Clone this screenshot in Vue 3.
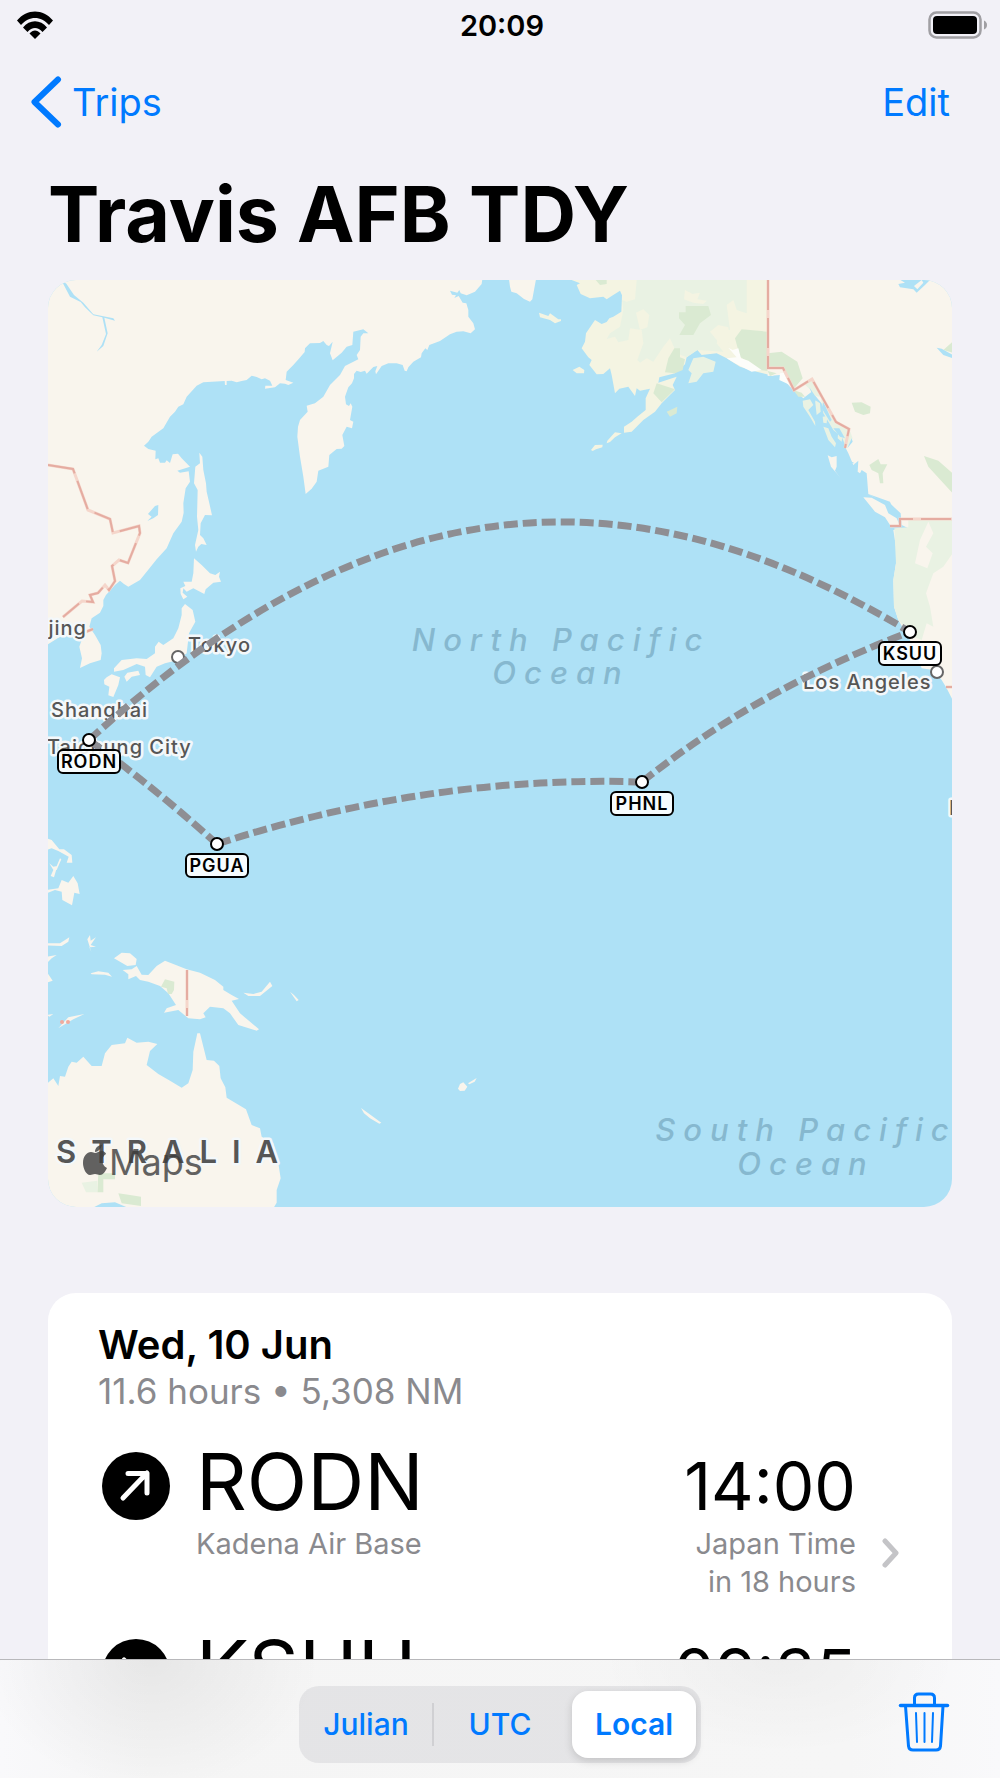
<template>
	<div class="screen">
		<main class="scroll">
			<div class="status">
				<svg class="status__wifi" viewBox="0 0 38 28" aria-hidden="true">
					<path d="M1 9.500C11-2.500 27-2.500 37 9.500L33 14C25 4.500 13 4.500 5 14Z" />
					<path d="M7 16.500C13.500 8 24.500 8 31 16.500L26.500 21C22 15.500 16 15.500 11.500 21Z" />
					<path d="M13.500 22.500C17 18.500 21 18.500 24.500 22.500L19 28Z" />
				</svg>
				<time class="status__time">20:09</time>
				<svg class="status__battery" viewBox="0 0 60 28" aria-hidden="true">
					<rect x="1.500" y="1.500" width="51" height="25" rx="7" fill="none" stroke="#a09fa3" stroke-width="2.500" />
					<rect x="5" y="5" width="44" height="18" rx="4" />
					<path d="M56 9.500Q59 11 59 14T56 18.500Z" fill="#a09fa3" />
				</svg>
			</div>

			<nav class="nav">
				<a href="#trips" class="nav__back">
					<svg viewBox="0 0 32 52" aria-hidden="true"><path d="M28 3.500L4.500 26L28 48.500" /></svg>
					Trips
				</a>
				<button type="button" class="nav__edit">Edit</button>
			</nav>

			<h1 class="title">Travis AFB TDY</h1>

			<svg class="map" viewBox="48 280 904 927" role="img" aria-label="Trip route map">
				<rect x="48" y="280" width="904" height="927" fill="#aee1f6" />

				<!-- east asia -->
				<g class="land" transform="translate(40 270) scale(.33333)">
					<path d="M20 28H1327L1325 42L1305 65L1280 76L1262 70L1258 60L1252 68L1230 62L1236 74L1248 76L1243 84L1256 78L1268 98L1279 100L1285 120L1285 140L1300 160L1305 178L1292 190L1270 184L1250 185L1230 193L1200 213L1168 225L1162 240L1156 235L1145 250L1143 262L1120 275L1105 292L1100 304L1094 302L1088 285L1070 280L1045 280L1025 288L1008 313L1006 304L1012 288L1000 291L980 311L975 302L962 306L950 302L942 312L942 325L936 340L925 352L915 380L918 403L927 408L932 400L937 410L930 450L940 455L936 475L920 470L907 495L913 528L905 536L890 537L868 555L865 590L835 602L830 635L815 656L797 672L790 620L780 560L772 500L774 470L780 450L803 425L800 407L825 400L850 380L870 345L900 315L915 288L955 268L950 255L960 240L962 200L970 190L985 190L970 178L940 185L937 225L920 230L905 248L878 271L870 250L878 215L867 228L860 225L850 213L840 219L810 220L795 235L794 246L778 265L760 285L740 305L737 330L760 338L745 345L735 341L720 340L705 352L675 356L676 347L697 347L690 332L675 325L665 328L650 321L635 317L620 330L605 333L590 337L575 332L560 333L560 345L555 345L554 333L490 337L470 347L440 380L430 403L415 410L405 425L390 440L370 475L335 500L325 515L312 527L325 537L347 542L346 568L355 565L360 578L375 578L380 571L390 579L398 553L414 551L425 565L450 590L412 602L420 608L446 604L450 635L437 655L430 700L431 728L425 755L400 790L380 835L350 868L320 905L300 930L265 950L252 942L240 932L225 945L198 975L190 990L190 1008L180 1028L155 1045L148 1070L165 1095L182 1125L185 1150L182 1170L150 1180L120 1194L126 1165L118 1130L125 1110L110 1085L85 1075L60 1100L20 1125Z" />
					<path d="M478 548L487 560L490 600L498 640L500 665L508 700L516 736L495 735L482 760L480 795L490 805L500 825L484 822L475 830L468 845L465 825L475 780L471 740L473 660L462 640L466 590L480 580Z" />
					<path d="M462 865L485 885L510 910L526 915L540 905L537 920L543 935L520 938L497 958L493 972L460 955L440 965L430 955L428 968L442 980L430 988L422 972L421 955L436 948L430 935L455 935L460 910Z" />
					<path d="M435 1002L458 1020L466 1055L447 1090L440 1150L415 1170L375 1180L350 1190L330 1222L317 1215L315 1190L290 1182L250 1200L222 1205L222 1195L245 1170L290 1165L320 1167L345 1150L345 1130L356 1115L370 1125L400 1105L415 1075L425 1035L425 1015Z" />
					<path d="M253 1220L262 1208L295 1202L300 1215L275 1220L260 1235Z" />
					<path d="M192 1230L200 1222L215 1213L240 1222L235 1245L220 1281L205 1276L208 1250L193 1243Z" />
					<path d="M20 1705L35 1710L58 1738L72 1738L95 1755L97 1778L80 1778L86 1760L55 1743L35 1735L20 1740ZM28 1780L40 1790L52 1788L42 1822L32 1818L40 1800ZM60 1765L64 1768L50 1800L46 1798Z" />
					<path d="M20 1860L55 1855L65 1830L85 1838L100 1818L113 1840L119 1872L103 1868L96 1906L67 1890L65 1865L45 1860L20 1870Z" />
					<path class="water" d="M68 38L78 40L102 75L130 98L160 133L220 145L225 152L193 143L203 190L190 228L170 245L185 225L198 192L187 142L160 136L135 112L122 96L90 80ZM355 705L354 735L340 745L322 753L335 740L324 732L345 708Z" />
				</g>

				<!-- chukotka, alaska and the american west coast -->
				<g class="land" transform="translate(560 270) scale(.33333)">
					<path d="M-153 28H-72L-77 55L-83 88L-90 95L-108 87L-130 70L-146 65L-150 50Z" />
					<path class="pale" d="M30 28L60 40L50 45L62 72L90 85L130 80L140 88L155 78L180 62L186 76L184 125L160 140L148 145L140 156L125 162L105 150L78 190L75 215L65 235L85 262L95 270L88 285L110 313L130 312L150 295L155 315L165 370L178 356L205 350L225 378L230 355L240 362L270 356L257 385L257 420L232 440L215 455L192 470L192 488L215 485L250 450L285 425L305 400L345 360L338 345L350 320L295 338L298 322L345 310L375 283L380 262L412 240L425 255L470 250L500 265L540 290L590 305L640 318L640 28Z" />
					<path class="pale" d="M-63 128L-35 138L-30 130L-5 148L3 148L3 153L-15 160L-30 150L-60 142ZM38 300L58 290L73 300L72 310L50 310ZM142 512L165 487L185 490L165 502L150 516L140 520ZM93 540L105 525L128 524L127 532L108 538L98 543Z" />
					<path class="mild" d="M230 28H560V130L530 120L520 90L500 105L510 180H480L470 220L490 245L412 240L380 262L350 250L330 205L310 230L280 275L260 265L240 278L232 270L250 220L245 180L210 175L205 210L175 217L165 200L140 207L150 190L180 170L190 120L186 90L200 95L225 88Z" />
					<path class="pale" d="M375 60L398 72L420 68L412 88L440 92L430 102L400 98L372 88ZM228 128L250 118L268 135L262 172L240 180ZM450 185L475 165L505 172L510 215L480 222Z" />
					<path class="mild" d="M400 265L430 260L467 275L460 305L430 310L410 335L385 340L395 310L385 300Z" />
					<path d="M623 28H1178V1290L1160 1255L1145 1230L1120 1200L1085 1195L1050 1110L1015 1050L1002 1010L1000 930L1008 880L1008 830L1000 780L1045 775L1025 765L1022 730L990 700L940 680L925 672L920 610L905 600L900 610L893 605L895 572L880 585L865 550L855 530L850 480L810 440L785 400L755 365L730 385L690 350L660 315L623 318Z" />
					<path class="mild" d="M730 340L757 325L825 452L868 478L878 505L860 535L845 500L820 480L790 430L782 380L760 378L752 360Z" />
					<path class="mild" d="M728 392L750 388L760 405L745 420L765 455L766 468L750 440L730 410ZM765 390L780 400L782 425L770 435ZM790 470L805 475L815 500L828 520L825 532L805 510ZM835 480L848 490L845 515L833 505ZM788 440L802 438L800 460L790 458Z" />
					<path d="M803 556L815 562L830 558L830 590L825 602L844 628L830 610L813 590Z" />
					<path d="M910 682L935 683L975 705L985 730L1010 745L1020 768L990 765L975 742L945 725Z" />
					<path class="mild" d="M1003 775L1045 772L1045 750H1178V850L1150 890L1120 910L1098 970L1110 1010L1120 1070L1100 1060L1085 1110L1060 1100L1015 1050L1002 1010L1000 930L1008 880Z" />
					<path d="M1105 755L1120 790L1098 830L1118 850L1102 895L1065 880L1080 810Z" />
					<path class="green" d="M377 108H445L453 135L420 160L400 195L358 195L375 165L357 145V127H377ZM545 178L622 185V303L600 300L540 260L525 205ZM623 250L665 245L712 275L728 325L700 358L668 295H623ZM343 235L360 235V262L375 268L368 300L345 310L315 307L325 265ZM290 340L345 358L305 397L280 370ZM107 30H140V42L120 45ZM320 425L352 410L350 430L330 440ZM875 398L905 397L932 410L930 430L910 435L885 425ZM928 585L955 567L962 583L982 583L968 610L970 640H960L955 610L935 600ZM1092 558L1135 572L1178 610V670L1160 650L1105 590ZM1178 215V248L1150 240ZM700 360L725 368L735 380L715 380ZM623 303L650 310L630 318Z" />
					<path class="ice" d="M505 233L518 240L535 235L543 265L565 272L605 300L575 305L545 290L525 280L500 265L530 262ZM660 310L672 308L690 345L658 330Z" />
					<path class="water" d="M1018 28H1112L1095 45L1070 68L1060 58L1020 52L1015 42L1035 38ZM1130 233L1145 236L1178 255V265L1150 255ZM748 352L770 385L765 395ZM790 395L815 450L810 455L785 415ZM820 475L838 475L855 505L840 500ZM875 505L878 515L862 535ZM862 570L885 580L865 578ZM925 672L990 695L1000 720L975 700Z" />
					<path d="M1062 48L1085 30L1090 38L1072 58Z" />
				</g>

				<!-- oceania -->
				<g class="land" transform="translate(40 880) scale(.33333)">
					<path d="M20 190L60 190L88 172L85 185L65 198L20 196ZM142 178L150 165L152 182L168 172L152 195L168 200L148 202L154 216ZM20 230L50 225L35 235L20 250ZM20 275L38 302L20 308ZM20 405L40 402L28 410Z" />
					<path d="M222 235L245 218L270 220L290 237L287 255L262 258ZM152 280L175 274L205 278L216 290L195 284L155 283ZM248 270L275 268L290 258L305 284L325 285L350 258L375 242L400 252L440 268L480 278L525 300L550 320L550 330L575 345L597 357L575 362L600 400L657 448L650 452L595 435L570 400L550 385L510 380L490 400L497 412L480 418L445 415L415 390L372 398L380 385L408 375L385 340L360 318L325 305L300 300L288 288L265 298L265 283Z" />
					<path d="M610 338L640 342L665 335L690 305L697 318L660 348L625 348ZM750 335L762 345L776 360L770 364ZM55 445L85 412L133 402L100 418L62 440Z" />
					<path d="M20 640V612L40 595L55 618L60 588L75 590L85 560L95 545L110 548L130 530L155 558L185 558L195 520L215 495L255 490L262 473L290 488L325 485L352 492L330 513L320 555L355 582L390 602L425 623L445 610L458 570L460 515L472 460L480 460L500 540L522 542L538 558L542 595L556 622L560 653L618 688L635 735L660 745L665 770L700 790L715 850L722 895L710 930L710 968L700 985H268L225 967L185 970L155 985H20Z" />
					<path d="M963 684L985 700L1024 728L1018 731L990 715L972 700Z" />
					<path d="M1254 626L1260 612L1270 607L1282 620L1274 632L1260 633ZM1284 610L1300 600L1310 594L1304 605L1288 613Z" />
					<path class="green" d="M375 298L403 305L402 330L395 342L384 342L380 325L363 320ZM175 880H225V898H190V937H172ZM235 940L270 945L303 950V978L245 970Z" />
					<path class="mild" d="M125 908L172 902V937H138Z" />
				</g>

				<g class="border">
					<path v-for="line in borders" :key="line" :d="line" />
					<path v-for="line in borders" :key="line + 'core'" class="border__core" :d="line" />
					<circle cx="62" cy="1022" r="2" />
					<circle cx="68" cy="1022" r="2" />
				</g>

				<g class="ocean">
					<text x="561" y="651">North Pacific</text>
					<text x="561" y="684">Ocean</text>
					<text x="806" y="1141">South Pacific</text>
					<text x="806" y="1175">Ocean</text>
				</g>

				<g class="city">
					<text x="87" y="635" text-anchor="end">Beijing</text>
					<text x="188" y="652">Tokyo</text>
					<text x="51" y="717">Shanghai</text>
					<text x="47" y="754">Taichung City</text>
					<text x="803" y="689">Los Angeles</text>
					<text x="949" y="815">I</text>
					<circle cx="178" cy="657" r="6" />
					<circle cx="937" cy="672" r="6" />
				</g>
				<text class="country" x="56" y="1163">STRALIA</text>

				<g class="brand">
					<path d="M102 1145C101 1149 98 1152 95 1152C95 1148 98 1145 102 1145ZM95 1153C97 1153 99 1151 102 1151C104 1151 106 1153 106 1154C101 1157 101 1165 107 1168C105 1172 103 1175 100 1175C98 1175 97 1174 95 1174C93 1174 92 1175 90 1175C86 1175 83 1168 83 1163C83 1156 87 1152 91 1152C93 1152 94 1153 95 1153Z" />
					<text x="109" y="1175">Maps</text>
				</g>

				<path v-for="leg in legs" :key="leg" class="route" :d="leg" />
				<g v-for="pin in pins" :key="pin.code" class="pin">
					<rect :x="pin.x - 31" :y="pin.y + 10" width="62" height="23" rx="5" />
					<text :x="pin.x" :y="pin.y + 28">{{ pin.code }}</text>
					<circle :cx="pin.x" :cy="pin.y" r="6" />
				</g>
			</svg>

			<section class="card">
				<h2 class="card__date">Wed, 10 Jun</h2>
				<p class="card__summary">11.6 hours • 5,308 NM</p>
				<a v-for="stop in stops" :key="stop.code" :href="'#' + stop.code" class="stop">
					<svg class="stop__icon" viewBox="0 0 68 68" aria-hidden="true">
						<circle cx="34" cy="34" r="34" />
						<path :d="stop.arrow" />
					</svg>
					<span class="stop__code">{{ stop.code }}</span>
					<time class="stop__time">{{ stop.time }}</time>
					<span class="stop__name">{{ stop.name }}</span>
					<span class="stop__zone">{{ stop.zone }}<br />{{ stop.relative }}</span>
					<svg class="stop__more" viewBox="0 0 20 56" aria-hidden="true"><path d="M3 16L14 28L3 40" /></svg>
				</a>
			</section>
		</main>

		<footer class="toolbar">
			<div class="segments" role="group" aria-label="Time display">
				<button
					v-for="mode in modes"
					:key="mode"
					type="button"
					:class="['segments__item', { 'segments__item--active': mode === current }]"
					:aria-pressed="mode === current"
					@click="current = mode"
				>{{ mode }}</button>
			</div>
			<button type="button" class="trash" aria-label="Delete trip">
				<svg viewBox="0 2 50 60" aria-hidden="true">
					<path d="M1.500 13.500H48.500" stroke-width="3.500" />
					<path d="M15.500 13V6Q15.500 2 19.500 2H31.500Q35.500 2 35.500 6V13M6.500 14L9.500 54Q10 58 14 58H37Q41 58 41.500 54L44 14" stroke-width="3" />
					<path d="M17 21L18 50M25.500 21V50M34 21L33 50" stroke-width="2" />
				</svg>
			</button>
		</footer>
	</div>
</template>

<script setup>
import { ref } from 'vue'

const modes = ['Julian', 'UTC', 'Local']
const current = ref('Local')

const pins = [
	{ code: 'RODN', x: 89, y: 740 },
	{ code: 'PGUA', x: 217, y: 844 },
	{ code: 'PHNL', x: 642, y: 782 },
	{ code: 'KSUU', x: 910, y: 632 }
]

const legs = [
	'M89 740C354 499 610 450 910 632',
	'M89 740Q156 789 217 844',
	'M217 844Q430 775 642 782',
	'M642 782Q758 689 910 632'
]

const borders = [
	'M48 465L73 469L88 510L110 519L113 533L139 526L140 533L128 563L119 560L112 566L115 581L109 590L105 585L98 593L90 595L93 602L82 601L63 617',
	'M83 633L93 629',
	'M768 280V368H783L794 390L812 379L836 422L849 429L845 448',
	'M890 526H900V519H952',
	'M946 687H952',
	'M187 970V1016'
]

const stops = [
	{
		code: 'RODN',
		name: 'Kadena Air Base',
		time: '14:00',
		zone: 'Japan Time',
		relative: 'in 18 hours',
		arrow: 'M21 46L45 21M26 21.500H45V41'
	},
	{
		code: 'KSUU',
		name: 'Travis Air Force Base',
		time: '09:35',
		zone: 'Pacific Time',
		relative: 'in 30 hours',
		arrow: 'M22 21L46 46M46 27V46H27'
	}
]
</script>

<style>
body {
	margin: 0;
	background: #f2f1f7;
}
</style>

<style scoped>
.screen {
	position: relative;
	height: 100vh;
	overflow: hidden;
	background: #f2f1f7;
	color: #000;
	font-family: Inter, "Liberation Sans", sans-serif;
}
.scroll {
	box-sizing: border-box;
	height: 100%;
	padding: 0 48px;
	overflow-y: auto;
	scrollbar-width: none;
}
button {
	padding: 0;
	border: 0;
	background: none;
	font: inherit;
	cursor: pointer;
}
a {
	color: inherit;
	text-decoration: none;
}

.status {
	display: flex;
	align-items: center;
	justify-content: space-between;
	height: 50px;
	margin: 0 -32px;
}
.status__wifi {
	width: 38px;
	height: 28px;
	margin-right: 22px;
}
.status__time {
	font-size: 29px;
	font-weight: 600;
}
.status__battery {
	width: 60px;
	height: 28px;
	margin-right: -4px;
}

.nav {
	display: flex;
	align-items: center;
	justify-content: space-between;
	height: 104px;
	margin: 0 2px 0 -18px;
	color: #007aff;
	font-size: 38px;
}
.nav__back {
	display: flex;
	align-items: center;
	gap: 10px;
}
.nav__back svg {
	width: 32px;
	height: 52px;
	fill: none;
	stroke: #007aff;
	stroke-width: 6;
	stroke-linecap: round;
	stroke-linejoin: round;
}
.nav__edit {
	color: #007aff;
}

.title {
	margin: 0;
	padding: 13px 0 19px;
	font-size: 77px;
	font-weight: 700;
	line-height: 94px;
}

.map {
	display: block;
	width: 100%;
	border-radius: 28px;
}
.land path {
	fill: #f9f5ed;
}
.land .pale {
	fill: #f4f4e2;
}
.land .mild {
	fill: #e9f2e3;
}
.land .green {
	fill: #daead2;
}
.land .water {
	fill: #aee1f6;
}
.land .ice {
	fill: #fdfdfa;
}
.border path {
	fill: none;
	stroke: #f5d6cb;
	stroke-width: 3;
}
.border .border__core {
	stroke: #e5aca1;
	stroke-width: 2;
	stroke-dasharray: 30 8;
}
.border circle {
	fill: #f0ab9e;
}
.ocean text {
	fill: #86b8cf;
	font-size: 31px;
	font-style: italic;
	font-weight: 500;
	letter-spacing: 8px;
	text-anchor: middle;
}
.city text,
.country {
	fill: #565656;
	stroke: #f4f8fa;
	stroke-width: 5px;
	stroke-linejoin: round;
	paint-order: stroke;
}
.city text {
	font-size: 20px;
	font-weight: 500;
	letter-spacing: 1px;
}
.city circle {
	fill: #fff;
	stroke: #666;
	stroke-width: 2;
}
.country {
	font-size: 31px;
	font-weight: 600;
	letter-spacing: 15px;
}
.brand {
	fill: #3c3c3c;
	font-size: 36px;
	opacity: .8;
}
.route {
	fill: none;
	stroke: #8e8e93;
	stroke-width: 7;
	stroke-dasharray: 14 5;
}
.pin rect,
.pin circle {
	fill: #fff;
	stroke: #000;
	stroke-width: 2;
}
.pin rect {
	fill: rgba(255, 255, 255, .9);
}
.pin text {
	font-size: 18px;
	font-weight: 600;
	letter-spacing: 1px;
	text-anchor: middle;
}

.card {
	margin-top: 86px;
	padding: 28px 50px 160px;
	border-radius: 28px;
	background: #fff;
}
.card__date {
	margin: 0;
	font-size: 40px;
	font-weight: 600;
	line-height: 48px;
}
.card__summary {
	margin: 0;
	color: #8a8a8e;
	font-size: 35px;
	line-height: 45px;
}

.stop {
	display: grid;
	grid-template-columns: 72px 1fr auto 20px;
	grid-template-rows: 88px auto;
	column-gap: 26px;
	align-items: baseline;
	margin-top: 23px;
}
.stop__icon {
	align-self: end;
	justify-self: end;
	width: 68px;
	height: 68px;
	margin-bottom: 5px;
}
.stop__icon path {
	fill: none;
	stroke: #fff;
	stroke-width: 5;
	stroke-linecap: round;
	stroke-linejoin: round;
}
.stop__code {
	font-size: 79px;
	line-height: 88px;
}
.stop__time {
	grid-column: 3;
	font-size: 66px;
	line-height: 66px;
	text-align: right;
}
.stop__name,
.stop__zone {
	color: #8a8a8e;
	font-size: 29px;
	line-height: 38px;
}
.stop__name {
	grid-column: 2;
	grid-row: 2;
}
.stop__zone {
	grid-column: 3;
	grid-row: 2;
	text-align: right;
}
.stop__more {
	grid-column: 4;
	grid-row: 2;
	align-self: start;
	width: 20px;
	height: 56px;
	fill: none;
	stroke: #c4c4c7;
	stroke-width: 5;
	stroke-linecap: round;
	stroke-linejoin: round;
}

.toolbar {
	position: absolute;
	right: 0;
	bottom: 0;
	left: 0;
	display: grid;
	grid-template-columns: 1fr 402px 1fr;
	align-items: center;
	box-sizing: border-box;
	height: 119px;
	padding: 10px 51px 0;
	border-top: 1px solid #b8b8bb;
	background:
		radial-gradient(ellipse 17% 110% at 15% 0, rgba(0, 0, 0, .06), transparent),
		radial-gradient(ellipse 18% 80% at 78% 0, rgba(0, 0, 0, .03), transparent),
		linear-gradient(90deg, #f9f9fb, #f5f5f5 15%, #f6f6f6 85%, #f9f9fb);
}
.segments {
	display: grid;
	grid-template-columns: repeat(3, 1fr);
	grid-column: 2;
	box-sizing: border-box;
	height: 77px;
	border-radius: 20px;
	background: rgba(118, 118, 128, .13);
}
.segments__item {
	position: relative;
	margin: 5px;
	border-radius: 16px;
	color: #007aff;
	font-size: 30px;
	font-weight: 500;
}
.segments__item:first-child::after {
	position: absolute;
	top: 12px;
	right: -6px;
	bottom: 12px;
	width: 2px;
	background: #d0d0d3;
	content: "";
}
.segments__item--active {
	background: #fff;
	box-shadow: 0 3px 8px rgba(0, 0, 0, .15);
	font-weight: 600;
}
.trash {
	justify-self: end;
	width: 50px;
	height: 60px;
}
.trash svg {
	display: block;
	width: 50px;
	height: 60px;
	overflow: visible;
	fill: none;
	stroke: #007aff;
	stroke-linecap: round;
}
</style>
